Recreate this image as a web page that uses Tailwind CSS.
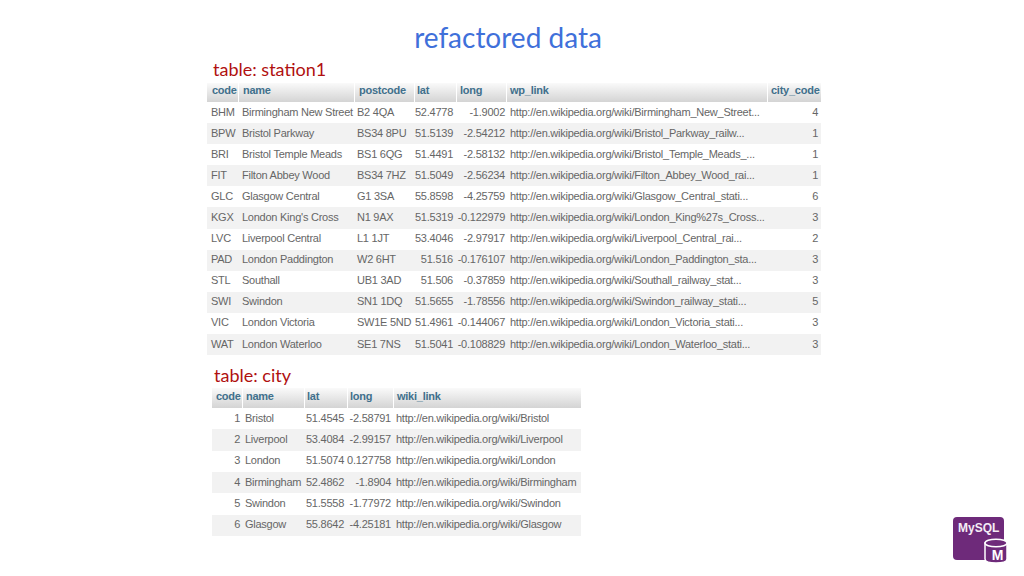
<!DOCTYPE html>
<html><head><meta charset="utf-8">
<script src="https://cdn.jsdelivr.net/npm/@tailwindcss/browser@4"></script>
</head>
<body class="bg-white">
<div class="relative w-[1024px] h-[576px] overflow-hidden bg-white font-['Liberation_Sans',sans-serif] text-[#666] text-[11px] tracking-[-0.25px]">
  <h1 class="pt-[20px] w-[1016px] text-center font-['Lato',sans-serif] text-[28px] tracking-normal leading-[34px] text-[#3f70da]">refactored data</h1>
  <p class="mt-[3px] ml-[213px] font-['Lato',sans-serif] text-[18px] tracking-normal leading-[24px] text-[#b01010]">table: station1</p>
  <table class="ml-[207px] mt-[2px] w-[614px] table-fixed border-separate border-spacing-0 leading-[16px] whitespace-nowrap [&_td]:pb-[2px]">
    <colgroup><col class="w-[31px]"><col class="w-[116px]"><col class="w-[60px]"><col class="w-[42px]"><col class="w-[50px]"><col class="w-[261px]"><col class="w-[54px]"></colgroup>
    <thead><tr class="h-[19px] bg-linear-to-b from-[#fafafa] to-[#d4d4d4] text-[#41708c] leading-[15px] [&_th]:pb-[4px] [&_th]:text-left [&_th]:font-bold">
      <th class="pl-[5px]">code</th><th class="pl-[4px] border-l border-white">name</th><th class="pl-[4px] border-l border-white">postcode</th><th class="pl-[2px] border-l border-white">lat</th><th class="pl-[3px] border-l border-white">long</th><th class="pl-[3px] border-l border-white">wp_link</th><th class="pl-[3px] border-l border-white">city_code</th>
    </tr></thead>
    <tbody>
      <tr class="h-[21.1px]"><td class="pl-[4px]">BHM</td><td class="pl-[4px]">Birmingham New Street</td><td class="pl-[3px]">B2 4QA</td><td class="pr-[3px] text-right">52.4778</td><td class="pr-[1px] text-right">-1.9002</td><td class="pl-[4px]">http://en.wikipedia.org/wiki/Birmingham_New_Street...</td><td class="pr-[3px] text-right">4</td></tr>
      <tr class="h-[21.1px] bg-[#f2f2f2]"><td class="pl-[4px]">BPW</td><td class="pl-[4px]">Bristol Parkway</td><td class="pl-[3px]">BS34 8PU</td><td class="pr-[3px] text-right">51.5139</td><td class="pr-[1px] text-right">-2.54212</td><td class="pl-[4px]">http://en.wikipedia.org/wiki/Bristol_Parkway_railw...</td><td class="pr-[3px] text-right">1</td></tr>
      <tr class="h-[21.1px]"><td class="pl-[4px]">BRI</td><td class="pl-[4px]">Bristol Temple Meads</td><td class="pl-[3px]">BS1 6QG</td><td class="pr-[3px] text-right">51.4491</td><td class="pr-[1px] text-right">-2.58132</td><td class="pl-[4px]">http://en.wikipedia.org/wiki/Bristol_Temple_Meads_...</td><td class="pr-[3px] text-right">1</td></tr>
      <tr class="h-[21.1px] bg-[#f2f2f2]"><td class="pl-[4px]">FIT</td><td class="pl-[4px]">Filton Abbey Wood</td><td class="pl-[3px]">BS34 7HZ</td><td class="pr-[3px] text-right">51.5049</td><td class="pr-[1px] text-right">-2.56234</td><td class="pl-[4px]">http://en.wikipedia.org/wiki/Filton_Abbey_Wood_rai...</td><td class="pr-[3px] text-right">1</td></tr>
      <tr class="h-[21.1px]"><td class="pl-[4px]">GLC</td><td class="pl-[4px]">Glasgow Central</td><td class="pl-[3px]">G1 3SA</td><td class="pr-[3px] text-right">55.8598</td><td class="pr-[1px] text-right">-4.25759</td><td class="pl-[4px]">http://en.wikipedia.org/wiki/Glasgow_Central_stati...</td><td class="pr-[3px] text-right">6</td></tr>
      <tr class="h-[21.1px] bg-[#f2f2f2]"><td class="pl-[4px]">KGX</td><td class="pl-[4px]">London King's Cross</td><td class="pl-[3px]">N1 9AX</td><td class="pr-[3px] text-right">51.5319</td><td class="pr-[1px] text-right">-0.122979</td><td class="pl-[4px]">http://en.wikipedia.org/wiki/London_King%27s_Cross...</td><td class="pr-[3px] text-right">3</td></tr>
      <tr class="h-[21.1px]"><td class="pl-[4px]">LVC</td><td class="pl-[4px]">Liverpool Central</td><td class="pl-[3px]">L1 1JT</td><td class="pr-[3px] text-right">53.4046</td><td class="pr-[1px] text-right">-2.97917</td><td class="pl-[4px]">http://en.wikipedia.org/wiki/Liverpool_Central_rai...</td><td class="pr-[3px] text-right">2</td></tr>
      <tr class="h-[21.1px] bg-[#f2f2f2]"><td class="pl-[4px]">PAD</td><td class="pl-[4px]">London Paddington</td><td class="pl-[3px]">W2 6HT</td><td class="pr-[3px] text-right">51.516</td><td class="pr-[1px] text-right">-0.176107</td><td class="pl-[4px]">http://en.wikipedia.org/wiki/London_Paddington_sta...</td><td class="pr-[3px] text-right">3</td></tr>
      <tr class="h-[21.1px]"><td class="pl-[4px]">STL</td><td class="pl-[4px]">Southall</td><td class="pl-[3px]">UB1 3AD</td><td class="pr-[3px] text-right">51.506</td><td class="pr-[1px] text-right">-0.37859</td><td class="pl-[4px]">http://en.wikipedia.org/wiki/Southall_railway_stat...</td><td class="pr-[3px] text-right">3</td></tr>
      <tr class="h-[21.1px] bg-[#f2f2f2]"><td class="pl-[4px]">SWI</td><td class="pl-[4px]">Swindon</td><td class="pl-[3px]">SN1 1DQ</td><td class="pr-[3px] text-right">51.5655</td><td class="pr-[1px] text-right">-1.78556</td><td class="pl-[4px]">http://en.wikipedia.org/wiki/Swindon_railway_stati...</td><td class="pr-[3px] text-right">5</td></tr>
      <tr class="h-[21.1px]"><td class="pl-[4px]">VIC</td><td class="pl-[4px]">London Victoria</td><td class="pl-[3px]">SW1E 5ND</td><td class="pr-[3px] text-right">51.4961</td><td class="pr-[1px] text-right">-0.144067</td><td class="pl-[4px]">http://en.wikipedia.org/wiki/London_Victoria_stati...</td><td class="pr-[3px] text-right">3</td></tr>
      <tr class="h-[21.1px] bg-[#f2f2f2]"><td class="pl-[4px]">WAT</td><td class="pl-[4px]">London Waterloo</td><td class="pl-[3px]">SE1 7NS</td><td class="pr-[3px] text-right">51.5041</td><td class="pr-[1px] text-right">-0.108829</td><td class="pl-[4px]">http://en.wikipedia.org/wiki/London_Waterloo_stati...</td><td class="pr-[3px] text-right">3</td></tr>
    </tbody>
  </table>
  <p class="mt-[8px] ml-[214px] font-['Lato',sans-serif] text-[18px] tracking-normal leading-[24px] text-[#b01010]">table: city</p>
  <table class="ml-[212px] mt-px w-[369px] table-fixed border-separate border-spacing-0 leading-[16px] whitespace-nowrap [&_td]:pb-[2px]">
    <colgroup><col class="w-[30px]"><col class="w-[62px]"><col class="w-[43px]"><col class="w-[46px]"><col class="w-[188px]"></colgroup>
    <thead><tr class="h-[20px] bg-linear-to-b from-[#fafafa] to-[#d4d4d4] text-[#41708c] leading-[15px] [&_th]:pb-[3px] [&_th]:text-left [&_th]:font-bold">
      <th class="pl-[4px]">code</th><th class="pl-[3px] border-l border-white">name</th><th class="pl-[2px] border-l border-white">lat</th><th class="pl-[2px] border-l border-white">long</th><th class="pl-[3px] border-l border-white">wiki_link</th>
    </tr></thead>
    <tbody>
      <tr class="h-[21.3px]"><td class="pr-[2px] text-right">1</td><td class="pl-[3px]">Bristol</td><td class="pr-[3px] text-right">51.4545</td><td class="pr-[2px] text-right">-2.58791</td><td class="pl-[3px]">http://en.wikipedia.org/wiki/Bristol</td></tr>
      <tr class="h-[21.3px] bg-[#f2f2f2]"><td class="pr-[2px] text-right">2</td><td class="pl-[3px]">Liverpool</td><td class="pr-[3px] text-right">53.4084</td><td class="pr-[2px] text-right">-2.99157</td><td class="pl-[3px]">http://en.wikipedia.org/wiki/Liverpool</td></tr>
      <tr class="h-[21.3px]"><td class="pr-[2px] text-right">3</td><td class="pl-[3px]">London</td><td class="pr-[3px] text-right">51.5074</td><td class="pr-[2px] text-right">0.127758</td><td class="pl-[3px]">http://en.wikipedia.org/wiki/London</td></tr>
      <tr class="h-[21.3px] bg-[#f2f2f2]"><td class="pr-[2px] text-right">4</td><td class="pl-[3px]">Birmingham</td><td class="pr-[3px] text-right">52.4862</td><td class="pr-[2px] text-right">-1.8904</td><td class="pl-[3px]">http://en.wikipedia.org/wiki/Birmingham</td></tr>
      <tr class="h-[21.3px]"><td class="pr-[2px] text-right">5</td><td class="pl-[3px]">Swindon</td><td class="pr-[3px] text-right">51.5558</td><td class="pr-[2px] text-right">-1.77972</td><td class="pl-[3px]">http://en.wikipedia.org/wiki/Swindon</td></tr>
      <tr class="h-[21.3px] bg-[#f2f2f2]"><td class="pr-[2px] text-right">6</td><td class="pl-[3px]">Glasgow</td><td class="pr-[3px] text-right">55.8642</td><td class="pr-[2px] text-right">-4.25181</td><td class="pl-[3px]">http://en.wikipedia.org/wiki/Glasgow</td></tr>
    </tbody>
  </table>
  <div class="absolute left-[953px] top-[517px] w-[51px] h-[43px] rounded-[4px] bg-[#6e2a7a] pl-[5px] pt-[4px] font-bold text-[12px] tracking-normal leading-[14px] text-[#f4ecf5]">MySQL</div>
  <svg class="absolute left-[984px] top-[538px]" width="24" height="26" viewBox="0 0 24 26">
    <path d="M1 5 V21 C1 23.5 5.5 25 12 25 S23 23.5 23 21 V5 Z" fill="#6e2a7a" stroke="#fff" stroke-width="1.5"/>
    <ellipse cx="12" cy="5" rx="11" ry="3.8" fill="#6e2a7a" stroke="#fff" stroke-width="1.5"/>
    <text x="13.5" y="21.5" text-anchor="middle" font-family="Liberation Sans" font-weight="700" font-size="14" fill="#fff">M</text>
  </svg>
</div>
</body></html>
